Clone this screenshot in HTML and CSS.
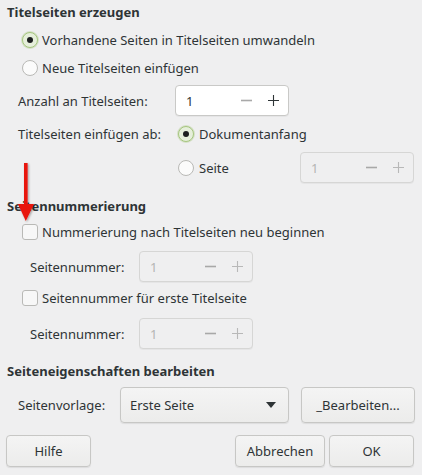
FILE: index.html
```html
<!DOCTYPE html>
<html lang="de">
<head>
<meta charset="utf-8">
<title>Titelseiten</title>
<link rel="stylesheet" href="styles.css">
</head>
<body>
<div class="dialog">
  <div class="heading h1">Titelseiten erzeugen</div>
  <div class="row opt first"><span class="radio checked"></span><span>Vorhandene Seiten in Titelseiten umwandeln</span></div>
  <div class="row opt second"><span class="radio"></span><span>Neue Titelseiten einfügen</span></div>
  <div class="row field anzahl">
    <span class="lbl w157">Anzahl an Titelseiten:</span>
    <div class="spin"><span class="val">1</span>
      <svg class="minus dim" width="11" height="11" viewBox="0 0 11 11"><path d="M0 5.5H11" stroke="currentColor" stroke-width="1.6"/></svg>
      <svg class="plus" width="11" height="11" viewBox="0 0 11 11"><path d="M0 5.5H11M5.5 0V11" stroke="currentColor" stroke-width="1.1"/></svg>
    </div>
  </div>
  <div class="row field ab">
    <span class="lbl w160">Titelseiten einfügen ab:</span>
    <span class="radio checked"></span><span class="rtext">Dokumentanfang</span>
  </div>
  <div class="row field seite">
    <span class="spacer160"></span>
    <span class="radio"></span><span class="rtext seitetext">Seite</span>
    <div class="spin disabled"><span class="val">1</span>
      <svg class="minus" width="11" height="11" viewBox="0 0 11 11"><path d="M0 5.5H11" stroke="currentColor" stroke-width="1.6"/></svg>
      <svg class="plus" width="11" height="11" viewBox="0 0 11 11"><path d="M0 5.5H11M5.5 0V11" stroke="currentColor" stroke-width="1.1"/></svg>
    </div>
  </div>

  <div class="heading h2">Seitennummerierung</div>
  <div class="row opt cb1"><span class="check"></span><span>Nummerierung nach Titelseiten neu beginnen</span></div>
  <div class="row field num1">
    <span class="lbl w109">Seitennummer:</span>
    <div class="spin disabled"><span class="val">1</span>
      <svg class="minus" width="11" height="11" viewBox="0 0 11 11"><path d="M0 5.5H11" stroke="currentColor" stroke-width="1.6"/></svg>
      <svg class="plus" width="11" height="11" viewBox="0 0 11 11"><path d="M0 5.5H11M5.5 0V11" stroke="currentColor" stroke-width="1.1"/></svg>
    </div>
  </div>
  <div class="row opt cb2"><span class="check"></span><span>Seitennummer für erste Titelseite</span></div>
  <div class="row field num2">
    <span class="lbl w109">Seitennummer:</span>
    <div class="spin disabled"><span class="val">1</span>
      <svg class="minus" width="11" height="11" viewBox="0 0 11 11"><path d="M0 5.5H11" stroke="currentColor" stroke-width="1.6"/></svg>
      <svg class="plus" width="11" height="11" viewBox="0 0 11 11"><path d="M0 5.5H11M5.5 0V11" stroke="currentColor" stroke-width="1.1"/></svg>
    </div>
  </div>

  <div class="heading h3">Seiteneigenschaften bearbeiten</div>
  <div class="row field vorlage">
    <span class="lbl w102">Seitenvorlage:</span>
    <div class="btn combo"><span>Erste Seite</span><svg class="caret" width="10" height="6" viewBox="0 0 10 6"><path d="M0 0H10L5 6Z" fill="#2e3436"/></svg></div>
    <div class="btn edit">_Bearbeiten...</div>
  </div>

  <div class="actions">
    <div class="btn hilfe">Hilfe</div>
    <div class="grow"></div>
    <div class="btn abbrechen">Abbrechen</div>
    <div class="btn ok">OK</div>
  </div>

  <svg class="arrow" width="24" height="66" viewBox="0 0 24 66">
    <defs>
      <filter id="sh" x="-50%" y="-20%" width="200%" height="140%">
        <feDropShadow dx="1" dy="1" stdDeviation="1" flood-color="#000" flood-opacity="0.35"/>
      </filter>
    </defs>
    <g filter="url(#sh)">
      <rect x="10" y="2" width="3.6" height="44" fill="#e8130f"/>
      <path d="M4 43 L20 43 L11.8 60 Z" fill="#e8130f"/>
    </g>
  </svg>
</div>
</body>
</html>
```

FILE: styles.css
```css
html, body {
  margin: 0;
  padding: 0;
  background: #efeff0;
}
body {
  font-family: "Noto Sans", "DejaVu Sans", sans-serif;
  font-size: 13px;
  color: #2e3436;
}
.dialog {
  position: relative;
  width: 422px;
  height: 475px;
  display: flex;
  flex-direction: column;
  box-sizing: border-box;
  padding: 0 8px 0 7px;
}
.heading {
  font-weight: bold;
  height: 20px;
  line-height: 20px;
}
.h1 { margin-top: 2px; }
.h2 { margin-top: 13px; }
.h3 { margin-top: 12px; }
.row {
  display: flex;
  align-items: center;
}
.opt {
  padding-left: 15px;
  height: 20px;
  gap: 4px;
}
.first { margin-top: 8px; }
.second { margin-top: 8px; }
.field {
  padding-left: 11px;
}
.anzahl { margin-top: 7px; height: 31px; }
.ab { margin-top: 8px; height: 20px; }
.seite { margin-top: 8px; height: 31px; }
.cb1 { margin-top: 6px; }
.num1 { margin-top: 9px; height: 31px; padding-left: 23px; }
.cb2 { margin-top: 6px; }
.num2 { margin-top: 10px; height: 31px; padding-left: 23px; }
.vorlage { margin-top: 6px; height: 36px; }

.lbl { flex: none; }
.w157 { width: 157px; }
.w160 { width: 160px; }
.spacer160 { width: 160px; flex: none; }
.w109 { width: 109px; }
.w102 { width: 102px; }
.rtext { margin-left: 5px; }
.seitetext { width: 102px; }

.radio {
  flex: none;
  box-sizing: border-box;
  width: 16px;
  height: 16px;
  border-radius: 50%;
  border: 1px solid #b9b9b6;
  background: #fbfbfb;
  display: flex;
  align-items: center;
  justify-content: center;
}
.radio.checked {
  border-color: #a6c67f;
  background: #e6efdb;
  box-shadow: 0 0 0 1px rgba(166,198,127,0.35);
}
.radio.checked::after {
  content: "";
  width: 6px;
  height: 6px;
  border-radius: 50%;
  background: #1d1f20;
}
.check {
  flex: none;
  box-sizing: border-box;
  width: 16px;
  height: 16px;
  border-radius: 3px;
  border: 1px solid #b9b9b6;
  background: #f7f7f7;
}

.spin {
  flex: none;
  box-sizing: border-box;
  width: 114px;
  height: 31px;
  border: 1px solid #c9c9c7;
  border-radius: 4px;
  background: #ffffff;
  display: flex;
  align-items: center;
  padding-left: 10px;
  box-shadow: 0 1px 0 rgba(0,0,0,0.04);
  color: #2e3436;
}
.spin .val { flex: 1; }
.spin svg { display: block; flex: none; }
.spin .minus { margin-right: 16px; }
.spin .plus { margin-right: 9px; }
.spin .dim { color: #a9a9a9; }
.spin.disabled {
  background: #efeff0;
  color: #b4b4b4;
  border-color: #d6d6d5;
}
.spin.disabled .minus { color: #a8a8a8; }
.spin.disabled .plus { color: #b8b8b8; }

.btn {
  box-sizing: border-box;
  border: 1px solid #c7c7c5;
  border-radius: 4px;
  background: linear-gradient(#f4f4f4, #ececeb);
  box-shadow: 0 1px 1px rgba(0,0,0,0.08);
  display: flex;
  align-items: center;
  justify-content: center;
  flex: none;
}
.combo {
  width: 169px;
  height: 36px;
  justify-content: space-between;
  padding: 0 12px 0 9px;
}
.caret { display: block; }
.edit {
  width: 114px;
  height: 36px;
  margin-left: 12px;
}
.actions {
  display: flex;
  margin-top: 12px;
  height: 32px;
  margin-left: -1px;
}
.grow { flex: 1; }
.hilfe { width: 85px; }
.abbrechen { width: 90px; }
.ok { width: 85px; margin-left: 4px; }

.arrow {
  position: absolute;
  left: 14px;
  top: 161px;
}
```
